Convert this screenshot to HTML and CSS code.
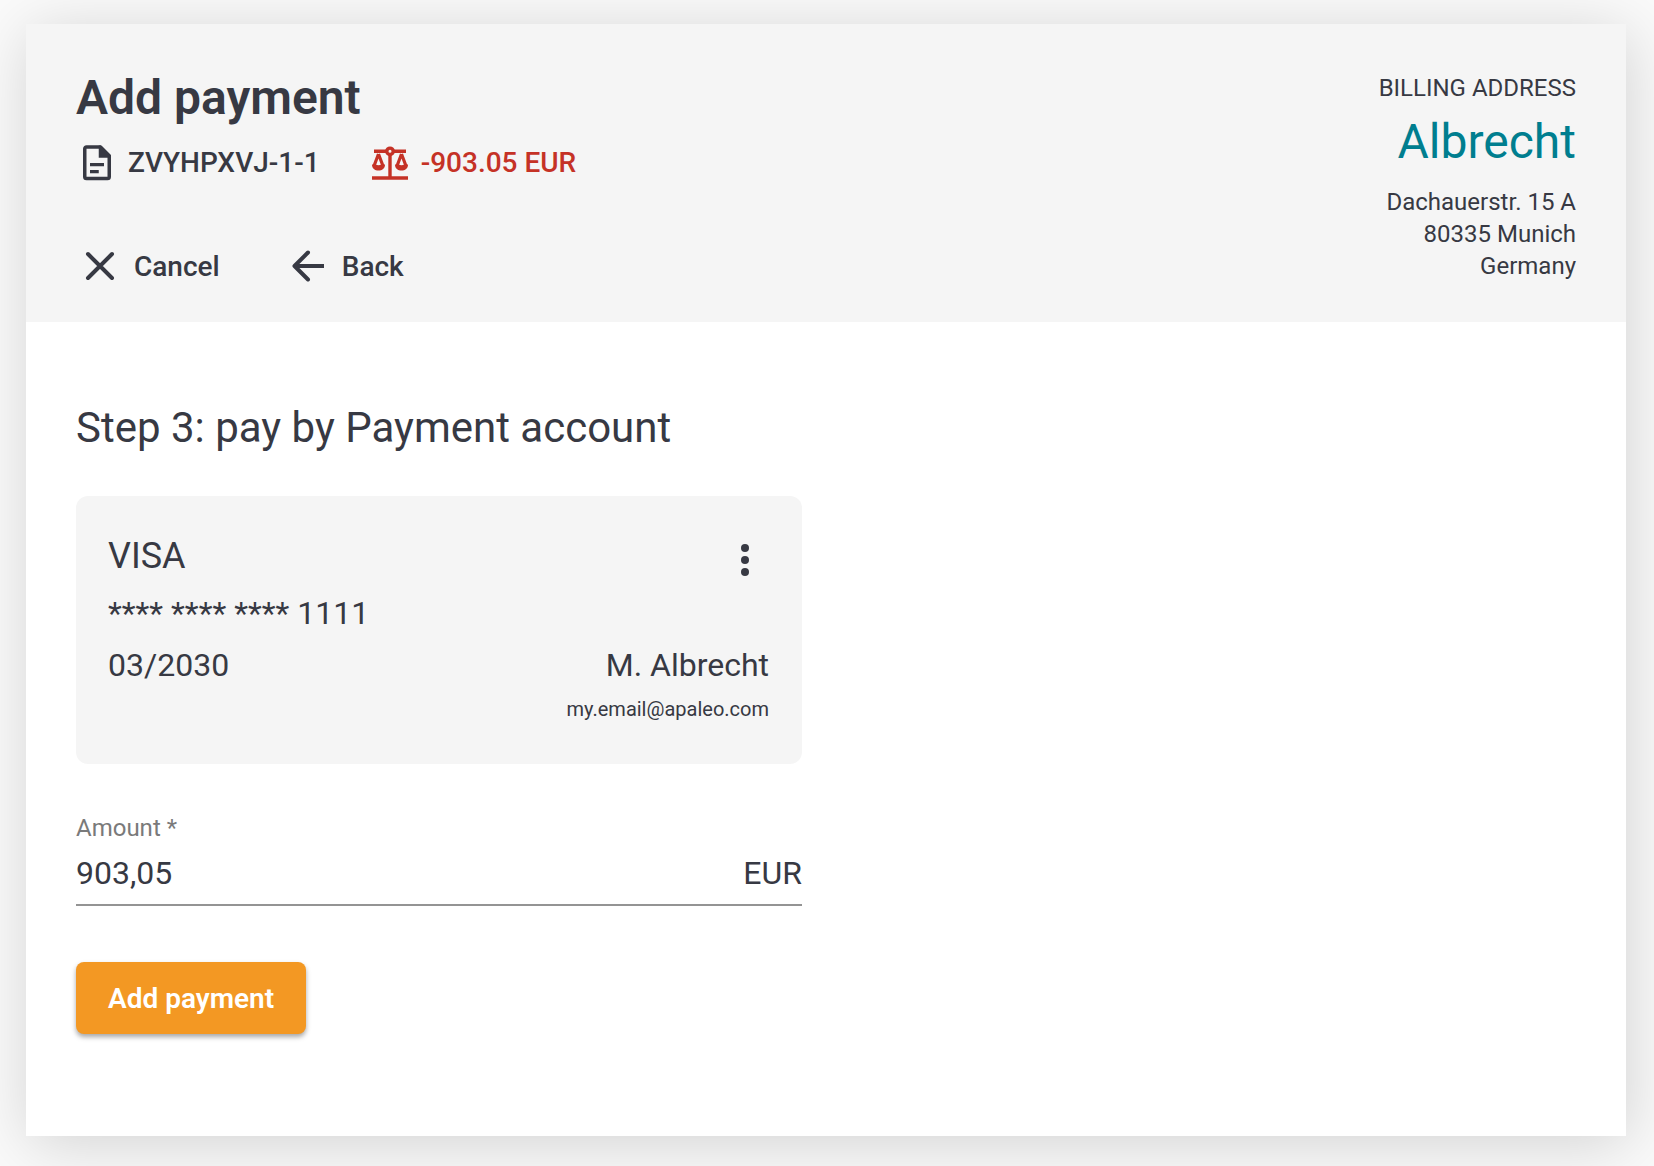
FILE: index.html
```html
<!DOCTYPE html>
<html lang="en">
<head>
<meta charset="utf-8">
<meta name="viewport" content="width=device-width, initial-scale=1">
<title>Add payment</title>
<link rel="stylesheet" href="styles.css">
</head>
<body>
<main class="panel">
  <header class="panel-header">
    <div class="summary">
      <h1 class="title">Add payment</h1>
      <div class="facts">
        <span class="fact">
          <svg class="fact-icon" viewBox="0 0 24 24" aria-hidden="true">
            <path fill="none" stroke="currentColor" stroke-width="2" stroke-linejoin="round" d="M14 2.800H6a1 1 0 0 0-1 1v16a1 1 0 0 0 1 1h12a1 1 0 0 0 1-1V7.800z"/>
            <path fill="currentColor" d="M13 2h1.200L20 7.800V9h-7zM8 12h8v1.800H8zM8 16h5v1.800H8z"/>
          </svg>
          ZVYHPXVJ-1-1
        </span>
        <span class="fact fact-negative">
          <svg class="fact-icon" viewBox="0 0 42 42" aria-hidden="true">
            <g fill="none" stroke="currentColor">
              <path stroke-width="3.400" d="M5 9.300h12M25 9.300h12M21 12v23"/>
              <path stroke-width="3.600" d="M3 36h36"/>
              <circle cx="21" cy="9.300" r="3.200" stroke-width="3.400"/>
              <path stroke-width="3.200" stroke-linejoin="round" d="M9.500 12L5 24M9.500 12L14 24M32.500 12L28 24M32.500 12L37 24"/>
            </g>
            <path fill="currentColor" d="M3 22.500h3.500q3 1.600 6 0H16c0 4-3 6-6.500 6S3 26.500 3 22.500zM26 22.500h3.500q3 1.600 6 0H39c0 4-3 6-6.500 6S26 26.500 26 22.500z"/>
          </svg>
          -903.05 EUR
        </span>
      </div>
      <nav class="actions">
        <button class="action" type="button">
          <svg class="action-icon" viewBox="0 0 48 48" aria-hidden="true"><path d="M12 12l24 24M36 12L12 36"/></svg>
          <span class="action-text">Cancel</span>
        </button>
        <button class="action" type="button">
          <svg class="action-icon" viewBox="0 0 48 48" aria-hidden="true"><path class="butt" d="M11 24h29"/><path d="M24 10.500L10.500 24 24 37.500"/></svg>
          <span class="action-text">Back</span>
        </button>
      </nav>
    </div>
    <div class="billing">
      <p class="billing-label">BILLING ADDRESS</p>
      <a class="billing-name" href="#">Albrecht</a>
      <address class="billing-address">Dachauerstr. 15 A<br>80335 Munich<br>Germany</address>
    </div>
  </header>
  <form class="content">
    <h2 class="step">Step 3: pay by Payment account</h2>
    <div class="column">
      <section class="account">
        <div class="account-row">
          <span class="brand">VISA</span>
          <button class="menu" type="button" aria-label="Account options">
            <svg class="menu-icon" viewBox="0 0 48 48" fill="currentColor" aria-hidden="true"><circle cx="24" cy="12" r="4"/><circle cx="24" cy="24" r="4"/><circle cx="24" cy="36" r="4"/></svg>
          </button>
        </div>
        <p class="number">**** **** **** 1111</p>
        <div class="account-row account-owner">
          <span>03/2030</span>
          <span>M. Albrecht</span>
        </div>
        <p class="email">my.email@apaleo.com</p>
      </section>
      <label class="field-label" for="amount">Amount *</label>
      <div class="field">
        <input class="field-input" id="amount" type="text" value="903,05">
        <span>EUR</span>
      </div>
      <button class="submit" type="submit">Add payment</button>
    </div>
  </form>
</main>
</body>
</html>
```
FILE: styles.css
```css
* {
  box-sizing: border-box;
}

body {
  margin: 0;
  padding: 24px 28px 30px 26px;
  background: #fafafa;
  color: #373943;
  font-family: Roboto, "Liberation Sans", sans-serif;
}

h1, h2, p {
  margin: 0;
}

button, input {
  padding: 0;
  border: 0;
  background: none;
  color: inherit;
  font: inherit;
}

button {
  cursor: pointer;
}

.panel {
  background: #fff;
  box-shadow: 3px 8px 60px rgba(0, 0, 0, 0.16);
}

.panel-header {
  display: flex;
  justify-content: space-between;
  padding: 48px 50px 32px;
  background: #f5f5f5;
}

.title {
  font-size: 48px;
  line-height: 52px;
  font-weight: 600;
}

.facts {
  display: flex;
  gap: 49px;
  margin-top: 18px;
}

.fact {
  display: flex;
  align-items: center;
  gap: 10px;
  font-size: 28px;
  line-height: 42px;
  font-weight: 500;
}

.fact-negative {
  color: #c53226;
}

.fact-icon {
  width: 42px;
  height: 42px;
}

.actions {
  display: flex;
  gap: 64px;
  margin-top: 58px;
}

.action {
  display: flex;
  align-items: center;
  gap: 10px;
  font-size: 28px;
  line-height: 46px;
  font-weight: 500;
}

.action-text {
  padding-top: 2px;
}

.action-icon {
  width: 48px;
  height: 48px;
  fill: none;
  stroke: currentColor;
  stroke-width: 4;
  stroke-linecap: round;
  stroke-linejoin: round;
}

.action-icon .butt {
  stroke-linecap: butt;
}

.billing {
  text-align: right;
  font-size: 24px;
  line-height: 32px;
}

.billing-name {
  display: block;
  margin: 10px 0 16px;
  color: #007e8f;
  font-size: 48px;
  line-height: 56px;
  text-decoration: none;
}

.billing-address {
  font-style: normal;
}

.content {
  padding: 82px 50px 102px;
}

.step {
  font-size: 42px;
  line-height: 48px;
  font-weight: 400;
}

.column {
  width: calc(50% - 24px);
  margin-top: 44px;
}

.account {
  padding: 40px 33px 43px 32px;
  border-radius: 12px;
  background: #f5f5f5;
  font-size: 32px;
  line-height: 40px;
}

.account-row {
  display: flex;
  justify-content: space-between;
}

.brand {
  font-size: 36px;
}

.menu {
  height: 48px;
}

.menu-icon {
  display: block;
  width: 48px;
  height: 48px;
}

.number {
  margin-top: 9px;
}

.account-owner {
  margin-top: 12px;
}

.email {
  margin-top: 12px;
  font-size: 20px;
  line-height: 24px;
  text-align: right;
}

.field-label {
  display: block;
  margin-top: 48px;
  color: #7a7a7a;
  font-size: 24px;
  line-height: 32px;
}

.field {
  display: flex;
  padding: 9px 0 11px;
  border-bottom: 2px solid #949494;
  font-size: 32px;
  line-height: 40px;
}

.field-input {
  flex: 1;
  min-width: 0;
  height: 40px;
  outline: none;
}

.submit {
  margin-top: 56px;
  padding: 2px 32px 0;
  border-radius: 8px;
  background: #f39823;
  box-shadow: 0 3px 5px rgba(0, 0, 0, 0.35);
  color: #fff;
  font-size: 28px;
  line-height: 70px;
  font-weight: 600;
}
```
